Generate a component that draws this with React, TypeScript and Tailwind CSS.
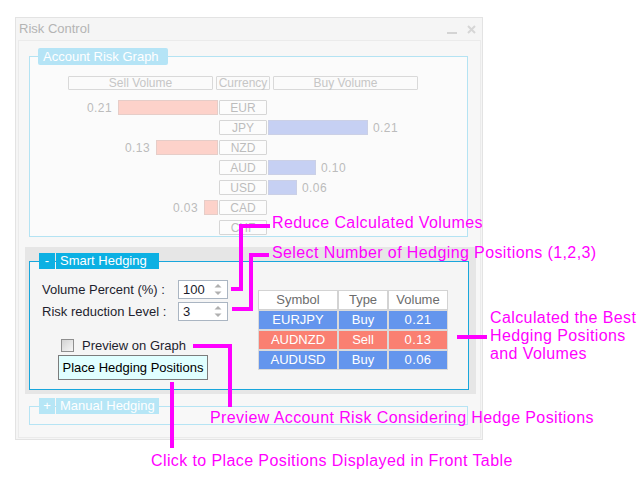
import React from "react";

type Exposure = { cur: string; sell?: number; buy?: number };

const exposure: Exposure[] = [
  { cur: "EUR", sell: 0.21 },
  { cur: "JPY", buy: 0.21 },
  { cur: "NZD", sell: 0.13 },
  { cur: "AUD", buy: 0.1 },
  { cur: "USD", buy: 0.06 },
  { cur: "CAD", sell: 0.03 },
  { cur: "CHF" },
];

const hedges = [
  { symbol: "EURJPY", type: "Buy", volume: "0.21" },
  { symbol: "AUDNZD", type: "Sell", volume: "0.13" },
  { symbol: "AUDUSD", type: "Buy", volume: "0.06" },
];

const barWidth = (v: number) => Math.round((v / 0.21) * 100);

function Spinner({ value }: { value: string }) {
  return (
    <div className="flex h-[19px] w-[50px] items-center justify-between border border-[#aab5c2] bg-white pl-[4px] pr-[5px] text-[13px] text-[#1c1c2c]">
      <span>{value}</span>
      <svg width="8" height="13" viewBox="0 0 8 13">
        <path d="M0.5 4.5 L4 1 L7.5 4.5 Z" fill="#b0b0b0" />
        <path d="M0.5 8.5 L4 12 L7.5 8.5 Z" fill="#b0b0b0" />
      </svg>
    </div>
  );
}

function AccountRiskGraph() {
  return (
    <div className="ml-[10px] mt-[7px]">
      <div className="relative z-10 ml-[9px] flex h-[17px] w-[130px] items-center rounded-[2px] bg-[#b5e4f6] pl-[5px] text-[13px] text-white">
        Account Risk Graph
      </div>
      <div className="-mt-[9px] h-[181px] w-[439px] border border-[#b4e3f3] bg-[#fbfbfb] pl-[38px] pt-[19px]">
        <div className="flex h-[14px] text-[12px] leading-[12px] text-[#c6c6c6]">
          <div className="flex w-[145px] items-center justify-center rounded-[1px] border border-[#d9d9d9]">Sell Volume</div>
          <div className="ml-[3px] flex w-[54px] items-center justify-center rounded-[1px] border border-[#d9d9d9]">Currency</div>
          <div className="ml-[3px] flex w-[145px] items-center justify-center rounded-[1px] border border-[#d9d9d9]">Buy Volume</div>
        </div>
        <div className="mt-[10px] flex flex-col gap-[5px] text-[12px] leading-[12px] text-[#bcbcbc]">
          {exposure.map((e) => (
            <div key={e.cur} className="flex h-[15px]">
              <div className="flex w-[150px] items-center justify-end gap-[6px]">
                {e.sell !== undefined && (
                  <>
                    <span className="tracking-[0.4px]">{e.sell.toFixed(2)}</span>
                    <div
                      className="h-[15px] border border-[#e6cdc8] bg-[#fdd2ca]"
                      style={{ width: barWidth(e.sell) }}
                    />
                  </>
                )}
              </div>
              <div className="ml-[1px] flex w-[48px] items-center justify-center rounded-[1px] border border-[#d6d6d6] bg-[#fcfcfc]">
                {e.cur}
              </div>
              <div className="ml-[1px] flex items-center gap-[5px]">
                {e.buy !== undefined && (
                  <>
                    <div
                      className="h-[15px] border border-[#cbd0e6] bg-[#c6d0f3]"
                      style={{ width: barWidth(e.buy) }}
                    />
                    <span className="tracking-[0.4px]">{e.buy.toFixed(2)}</span>
                  </>
                )}
              </div>
            </div>
          ))}
        </div>
      </div>
    </div>
  );
}

function SmartHedging() {
  return (
    <div className="ml-[6px] mt-[10px] w-[451px] bg-[#e6e6e6] pb-[4px] pl-[4px] pt-[6px]">
      <div className="relative z-10 ml-[10px] flex h-[16px] text-[13px] text-white">
        <div className="flex w-[16px] items-center justify-center bg-[#0cb0e3]">-</div>
        <div className="ml-[1px] flex w-[103px] items-center bg-[#0cb0e3] pl-[4px]">Smart Hedging</div>
      </div>
      <div className="-mt-[8px] flex h-[129px] w-[440px] border border-[#18a6dc] bg-[#f5f5f5] text-[13px] text-[#1e1e2e]">
        <div className="w-[228px] pl-[12px] pt-[18px]">
          <div className="flex h-[19px] items-center">
            <span className="w-[136px]">Volume Percent (%) :</span>
            <Spinner value="100" />
          </div>
          <div className="mt-[3px] flex h-[19px] items-center">
            <span className="w-[136px]">Risk reduction Level :</span>
            <Spinner value="3" />
          </div>
          <div className="ml-[19px] mt-[18px] flex h-[13px] items-center gap-[8px]">
            <div className="h-[13px] w-[13px] border border-[#8e8e8e] bg-gradient-to-br from-[#d2d2d2] to-[#f6f6f6]" />
            <span>Preview on Graph</span>
          </div>
          <button className="ml-[16px] mt-[3px] flex h-[25px] w-[150px] items-center justify-center border border-[#7c7c7c] bg-[#e0ffff] text-[13px] text-black">
            Place Hedging Positions
          </button>
        </div>
        <div className="mt-[28px] flex flex-col">
          <div className="flex h-[20px] bg-white text-[#6c6c6c]">
            <div className="flex w-[80px] items-center justify-center border border-[#d3d3d3]">Symbol</div>
            <div className="flex w-[50px] items-center justify-center border border-[#d3d3d3]">Type</div>
            <div className="flex w-[60px] items-center justify-center border border-[#d3d3d3]">Volume</div>
          </div>
          {hedges.map((h) => (
            <div
              key={h.symbol}
              className={`flex h-[20px] text-white ${h.type === "Buy" ? "bg-[#6495ed]" : "bg-[#fa8072]"}`}
            >
              <div className="flex w-[80px] items-center justify-center border border-[#dadada]">{h.symbol}</div>
              <div className="flex w-[50px] items-center justify-center border border-[#dadada]">{h.type}</div>
              <div className="flex w-[60px] items-center justify-center border border-[#dadada] tracking-[0.4px]">{h.volume}</div>
            </div>
          ))}
        </div>
      </div>
    </div>
  );
}

function ManualHedging() {
  return (
    <div className="ml-[10px] mt-[4px]">
      <div className="relative z-10 ml-[10px] flex h-[16px] text-[13px] text-white">
        <div className="flex w-[16px] items-center justify-center bg-[#b6e6f6]">+</div>
        <div className="ml-[1px] flex w-[103px] items-center bg-[#b6e6f6] pl-[4px]">Manual Hedging</div>
      </div>
      <div className="-mt-[8px] h-[19px] w-[439px] border border-[#b6e4f4] bg-[#f8f8f8]" />
    </div>
  );
}

function Callout({ className, children }: { className: string; children: React.ReactNode }) {
  return (
    <div className={`absolute whitespace-nowrap text-[16px] leading-[18px] tracking-[0.4px] text-[#ff00ff] ${className}`}>
      {children}
    </div>
  );
}

function Line({ className }: { className: string }) {
  return <div className={`absolute bg-[#ff00ff] ${className}`} />;
}

export default function App() {
  return (
    <div className="relative h-[480px] w-[640px] overflow-hidden bg-white font-['Liberation_Sans',Arial,sans-serif]">
      <div className="ml-[15px] mt-[17px] flex h-[423px] w-[468px] flex-col border border-[#e3e3e3] bg-[#f5f5f5]">
        <div className="flex h-[22px] items-center justify-between pl-[3px] pr-[6px]">
          <span className="text-[13px] text-[#b4b4b4]">Risk Control</span>
          <div className="flex items-center">
            <div className="mt-[7px] h-[2px] w-[10px] bg-[#d4d4d4]" />
            <svg className="ml-[10px]" width="9" height="9" viewBox="0 0 9 9">
              <path d="M1 1 L8 8 M8 1 L1 8" stroke="#d6d6d6" strokeWidth="2" />
            </svg>
          </div>
        </div>
        <div className="mb-[1px] ml-[2px] mr-[1px] flex-1 border border-[#ebebeb] bg-[#f7f7f7]">
          <AccountRiskGraph />
          <SmartHedging />
          <ManualHedging />
        </div>
      </div>

      {/* annotation callouts */}
      <Line className="left-[239px] top-[224px] h-[4px] w-[31px]" />
      <Line className="left-[239px] top-[224px] h-[67px] w-[4px]" />
      <Line className="left-[231px] top-[287px] h-[4px] w-[12px]" />
      <Callout className="left-[272px] top-[214px]">Reduce Calculated Volumes</Callout>

      <Line className="left-[249px] top-[253px] h-[4px] w-[20px]" />
      <Line className="left-[249px] top-[253px] h-[58px] w-[4px]" />
      <Line className="left-[232px] top-[307px] h-[4px] w-[21px]" />
      <Callout className="left-[272px] top-[244px]">Select Number of Hedging Positions (1,2,3)</Callout>

      <Line className="left-[457px] top-[335px] h-[4px] w-[30px]" />
      <Callout className="left-[490px] top-[309px] leading-[17.5px]">
        Calculated the Best
        <br />
        Hedging Positions
        <br />
        and Volumes
      </Callout>

      <Line className="left-[193px] top-[344px] h-[4px] w-[39px]" />
      <Line className="left-[228px] top-[344px] h-[63px] w-[4px]" />
      <Callout className="left-[210px] top-[409px]">Preview Account Risk Considering Hedge Positions</Callout>

      <Line className="left-[170px] top-[382px] h-[66px] w-[4px]" />
      <Callout className="left-[151px] top-[452px]">Click to Place Positions Displayed in Front Table</Callout>
    </div>
  );
}
